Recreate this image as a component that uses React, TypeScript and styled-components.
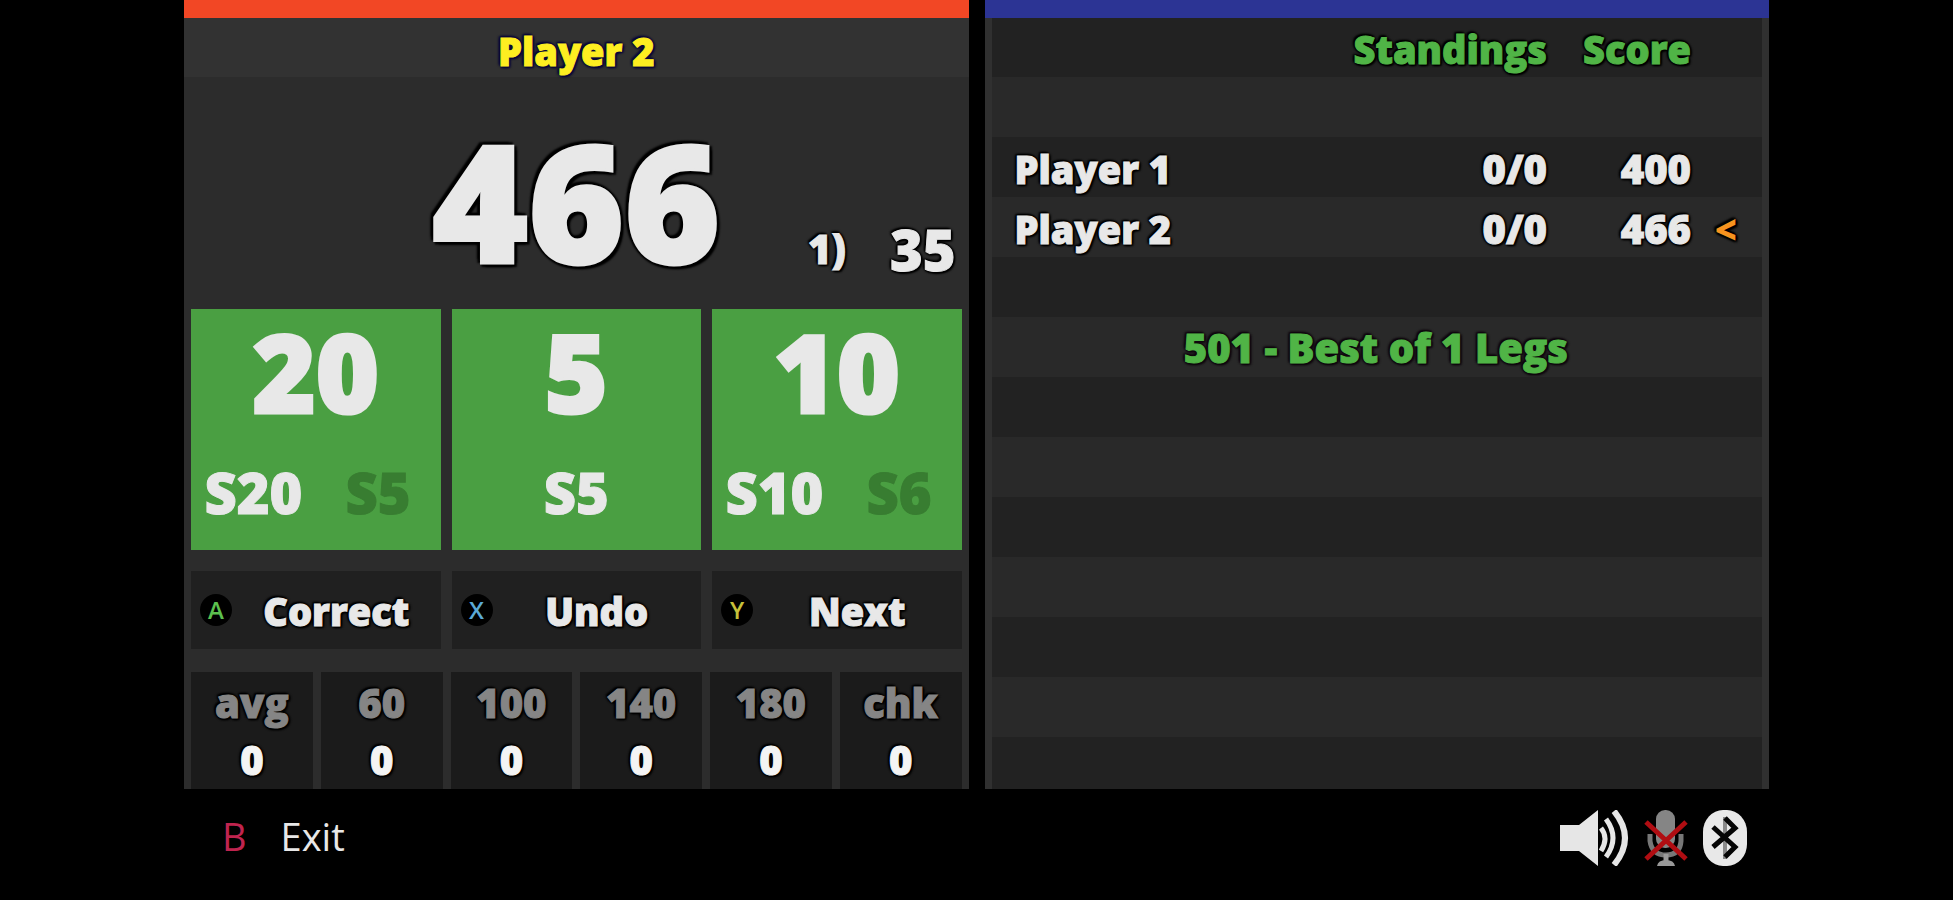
import React from "react";
import styled, { createGlobalStyle } from "styled-components";

const GlobalStyle = createGlobalStyle`
  * { box-sizing: border-box; }
  body { margin: 0; background: #000; }
  button { font: inherit; color: inherit; border: 0; padding: 0; margin: 0; background: none; cursor: pointer; }
`;

const outline = (size: number, colour: string) =>
  `text-shadow: ${size}px 0 2px ${colour}, -${size}px 0 2px ${colour}, 0 ${size}px 2px ${colour}, 0 -${size}px 2px ${colour}, ${size}px ${size}px 2px ${colour}, -${size}px -${size}px 2px ${colour};`;

const Page = styled.div`
  min-height: 100vh;
  padding: 0 184px;
  display: flex;
  flex-direction: column;
  background: #000;
  color: #e8e8e8;
  font-family: "Open Sans", "Noto Sans", sans-serif;
  font-size: 38px;
  line-height: 60px;
  font-weight: 800;
`;

const Board = styled.main`
  flex: 1;
  display: grid;
  grid-template-columns: 1fr 1fr;
  gap: 16px;
  -webkit-text-stroke: 1px currentColor;
`;

const Panel = styled.section<{ $accent: string }>`
  display: flex;
  flex-direction: column;
  min-width: 0;
  border-top: 18px solid ${(p) => p.$accent};
  background: #2c2c2c;
`;

const PlayerName = styled.h1`
  margin: 0;
  height: 59px;
  padding-top: 7px;
  font-size: 38px;
  line-height: 52px;
  font-weight: 800;
  text-align: center;
  color: #fdee21;
  background: #323232;
  ${outline(2, "#0a0838")}
`;

const ScoreArea = styled.div`
  flex: 1;
  display: grid;
  grid-template-columns: 1fr auto 1fr;
  align-items: end;
  padding: 0 13px 30px;
`;

const Remaining = styled.div`
  grid-column: 2;
  font-size: 164px;
  line-height: 158px;
  -webkit-text-stroke-width: 3px;
  ${outline(4, "#000")}
`;

const Round = styled.div`
  display: flex;
  justify-content: flex-end;
  align-items: center;
  gap: 44px;
  font-size: 40px;
  ${outline(2, "#000")}
`;

const RoundTotal = styled.span`
  font-size: 56px;
`;

const Tiles = styled.div`
  display: grid;
  grid-template-columns: repeat(3, 1fr);
  gap: 11px;
  padding: 0 7px;
`;

const Tile = styled.div`
  height: 241px;
  display: flex;
  flex-direction: column;
  justify-content: space-between;
  padding: 4px 0 28px;
  background: #4a9f42;
  text-align: center;
`;

const TilePoints = styled.div`
  font-size: 108px;
  line-height: 118px;
  -webkit-text-stroke-width: 3px;
`;

const Throws = styled.div`
  display: flex;
  font-size: 56px;
`;

const Throw = styled.span<{ $dim?: boolean }>`
  flex: 1;
  color: ${(p) => (p.$dim ? "#387d31" : "inherit")};
`;

const Actions = styled(Tiles)`
  margin-top: 21px;
`;

const Action = styled.button`
  height: 78px;
  display: flex;
  align-items: center;
  padding-left: 9px;
  background: #202020;
  ${outline(2, "#000")}
`;

const Badge = styled.span<{ $colour: string }>`
  width: 32px;
  height: 32px;
  border-radius: 50%;
  background: #000;
  color: ${(p) => p.$colour};
  font-size: 24px;
  line-height: 32px;
  font-weight: 600;
  text-align: center;
  -webkit-text-stroke-width: 0;
`;

const ActionLabel = styled.span`
  flex: 1;
  padding-top: 2px;
`;

const Stats = styled.dl`
  margin: 23px 0 0;
  padding: 0 7px;
  display: grid;
  grid-template-columns: repeat(6, 1fr);
  gap: 8px;
  font-size: 40px;
  text-align: center;
  ${outline(2, "#000")}
`;

const Stat = styled.div`
  height: 117px;
  padding-top: 2px;
  line-height: 57px;
  background: #1b1b1b;
`;

const StatName = styled.dt`
  color: #858585;
`;

const StatValue = styled.dd`
  margin: 0;
  color: #f4f4f4;
`;

const Standings = styled(Panel)`
  background: linear-gradient(90deg, #303030 7px, transparent 7px calc(100% - 7px), #303030 calc(100% - 7px)),
    repeating-linear-gradient(#222 0 60px, #292929 60px 120px) 0 -1px;
  padding: 0 32px 0 30px;
`;

const Table = styled.table`
  width: 100%;
  border-collapse: collapse;
  ${outline(2, "#000")}

  th, td {
    height: 60px;
    padding: 2px 0 0;
    line-height: 56px;
    font-weight: 800;
    text-align: left;
  }
`;

const HeadRow = styled.tr`
  color: #50b446;
`;

const Figure = styled.td`
  && { text-align: right; }
  font-size: 40px;
`;

const FigureHead = styled.th<{ $width: number }>`
  && { text-align: right; }
  width: ${(p) => p.$width}px;
`;

const MarkHead = styled.th`
  width: 46px;
`;

const Mark = styled.td`
  && { text-align: right; }
  color: #f7931e;
  -webkit-text-stroke-width: 0;
`;

const Format = styled.p`
  margin: 60px 0 0;
  font-size: 40px;
  text-align: center;
  color: #50b446;
  ${outline(2, "#10080f")}
`;

const Footer = styled.footer`
  height: 111px;
  display: flex;
  align-items: center;
  justify-content: space-between;
  padding: 0 22px 14px 38px;
`;

const ExitButton = styled.button`
  display: flex;
  gap: 34px;
  padding-bottom: 4px;
  font-weight: 500;
`;

const ExitKey = styled.span`
  color: #c0244f;
`;

const Icons = styled.div`
  display: flex;
  gap: 15px;
`;

const IconButton = styled.button`
  display: flex;
`;

const tiles = [
  { points: 20, hit: "S20", alt: "S5" },
  { points: 5, hit: "S5" },
  { points: 10, hit: "S10", alt: "S6" },
];

const actions = [
  { key: "A", colour: "#5cc04e", label: "Correct" },
  { key: "X", colour: "#5ba9d6", label: "Undo" },
  { key: "Y", colour: "#c6c03a", label: "Next" },
];

const stats = ["avg", "60", "100", "140", "180", "chk"];

const players = [
  { name: "Player 1", legs: "0/0", score: 400, active: false },
  { name: "Player 2", legs: "0/0", score: 466, active: true },
];

const SpeakerIcon = () => (
  <svg width="69" height="56" viewBox="0 0 69 56" aria-hidden="true">
    <path d="M0 15h19L38 0v56L19 41H0z" fill="#e6e6e6" />
    <g fill="none" stroke="#e6e6e6">
      <path d="M41 18q8 10 0 23" strokeWidth="5" />
      <path d="M46 9q14 19 0 38" strokeWidth="5" />
      <path d="M54 1q22 27 0 54" strokeWidth="6" />
    </g>
  </svg>
);

const MicOffIcon = () => (
  <svg width="44" height="56" viewBox="0 0 44 56" aria-hidden="true">
    <rect x="12" y="0" width="19" height="38" rx="9" fill="#858585" />
    <path d="M6 24v7q2 14 16 14t15-14v-7" fill="none" stroke="#777" strokeWidth="5" />
    <path d="M22 44v8" stroke="#999" strokeWidth="5" />
    <path d="M13 56q1-6 9-6t9 6z" fill="#999" />
    <path d="M2 12L42 49M42 12L2 49" stroke="#b00d12" strokeWidth="5" />
  </svg>
);

const BluetoothIcon = () => (
  <svg width="44" height="56" viewBox="0 0 44 56" aria-hidden="true">
    <rect width="44" height="56" rx="20" ry="22" fill="#e8e8e8" />
    <path d="M22 7v42" stroke="#8a8a8a" strokeWidth="4" />
    <path d="M22 8l10 10-22 19M10 17l22 20-10 10" fill="none" stroke="#050505" strokeWidth="5" />
  </svg>
);

export default function App() {
  return (
    <Page>
      <GlobalStyle />
      <Board>
        <Panel $accent="#f24725">
          <PlayerName>Player 2</PlayerName>
          <ScoreArea>
            <Remaining>466</Remaining>
            <Round>
              <span>1)</span>
              <RoundTotal>35</RoundTotal>
            </Round>
          </ScoreArea>
          <Tiles>
            {tiles.map((t) => (
              <Tile key={t.points}>
                <TilePoints>{t.points}</TilePoints>
                <Throws>
                  <Throw>{t.hit}</Throw>
                  {t.alt && <Throw $dim>{t.alt}</Throw>}
                </Throws>
              </Tile>
            ))}
          </Tiles>
          <Actions>
            {actions.map((a) => (
              <Action key={a.key} type="button">
                <Badge $colour={a.colour}>{a.key}</Badge>
                <ActionLabel>{a.label}</ActionLabel>
              </Action>
            ))}
          </Actions>
          <Stats>
            {stats.map((s) => (
              <Stat key={s}>
                <StatName>{s}</StatName>
                <StatValue>0</StatValue>
              </Stat>
            ))}
          </Stats>
        </Panel>
        <Standings $accent="#2c3494">
          <Table>
            <thead>
              <HeadRow>
                <th aria-label="Player" />
                <FigureHead $width={200}>Standings</FigureHead>
                <FigureHead $width={144}>Score</FigureHead>
                <MarkHead aria-label="Turn" />
              </HeadRow>
            </thead>
            <tbody>
              <tr>
                <td colSpan={4} />
              </tr>
              {players.map((p) => (
                <tr key={p.name}>
                  <td>{p.name}</td>
                  <Figure>{p.legs}</Figure>
                  <Figure>{p.score}</Figure>
                  <Mark>{p.active ? "<" : ""}</Mark>
                </tr>
              ))}
            </tbody>
          </Table>
          <Format>501 - Best of 1 Legs</Format>
        </Standings>
      </Board>
      <Footer>
        <ExitButton type="button">
          <ExitKey>B</ExitKey>
          <span>Exit</span>
        </ExitButton>
        <Icons>
          <IconButton type="button" aria-label="Sound">
            <SpeakerIcon />
          </IconButton>
          <IconButton type="button" aria-label="Microphone off">
            <MicOffIcon />
          </IconButton>
          <IconButton type="button" aria-label="Bluetooth">
            <BluetoothIcon />
          </IconButton>
        </Icons>
      </Footer>
    </Page>
  );
}
